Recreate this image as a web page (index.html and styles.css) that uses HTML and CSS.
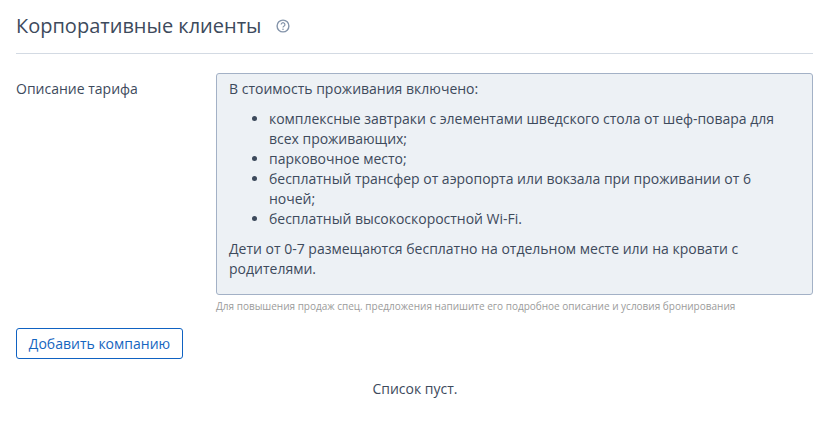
FILE: index.html
```html
<!DOCTYPE html>
<html lang="ru">
<head>
<meta charset="utf-8">
<title>Корпоративные клиенты</title>
<link rel="stylesheet" href="styles.css">
</head>
<body>
<main class="page">
  <header class="head">
    <h1 class="title">Корпоративные клиенты</h1>
    <svg class="help" width="14" height="14" viewBox="0 0 14 14" aria-hidden="true">
      <circle cx="7" cy="7" r="5.9" fill="none" stroke="#8494aa" stroke-width="1.4"/>
      <path d="M5.2 5.6a1.85 1.85 0 1 1 2.9 1.5c-.7.45-1.1.8-1.1 1.5" fill="none" stroke="#8494aa" stroke-width="1.2"/>
      <circle cx="7" cy="10.2" r=".8" fill="#8494aa"/>
    </svg>
  </header>
  <section class="row">
    <div class="label">Описание тарифа</div>
    <div class="field">
      <div class="box">
        <p>В стоимость проживания включено:</p>
        <ul>
          <li>комплексные завтраки с элементами шведского стола от шеф-повара для всех проживающих;</li>
          <li>парковочное место;</li>
          <li>бесплатный трансфер от аэропорта или вокзала при проживании от 6 ночей;</li>
          <li>бесплатный высокоскоростной Wi-Fi.</li>
        </ul>
        <p>Дети от 0-7 размещаются бесплатно на отдельном месте или на кровати с родителями.</p>
      </div>
      <div class="hint">Для повышения продаж спец. предложения напишите его подробное описание и условия бронирования</div>
    </div>
  </section>
  <button class="btn" type="button">Добавить компанию</button>
  <div class="empty">Список пуст.</div>
</main>
</body>
</html>
```
FILE: styles.css
```css
* { box-sizing: border-box; }
html, body { margin: 0; background: #fff; }
body { font-family: "Open Sans", "Noto Sans", sans-serif; font-size: 14px; line-height: 20px; color: #3d4a5c; }
.page { padding: 0 17px 0 16px; height: 437px; overflow: hidden; }
.head { display: flex; align-items: center; gap: 15px; height: 54px; border-bottom: 1px solid #d3dae3; }
.title { margin: -1px 0 0; font-size: 20px; line-height: 28px; font-weight: 400; color: #3d4a5c; }
.help { flex: none; margin-top: -1px; }
.row { display: flex; margin-top: 19px; }
.label { width: 200px; flex: none; padding-top: 6px; }
.field { flex: 1; min-width: 0; }
.box { height: 222px; padding: 5px 12px; background: #edf1f5; border: 1px solid #a3b1c6; border-radius: 3px; }
.box p { margin: 0; }
.box ul { margin: 10px 0; padding-left: 40px; letter-spacing: -0.02px; }
.hint { margin-top: 4px; font-size: 10px; line-height: 15px; color: #9b9b9b; }
.btn { display: block; margin-top: 14px; width: 167px; height: 31px; padding: 0; font: inherit; color: #1565c0; background: #fff; border: 1px solid #0f62c2; border-radius: 3px; }
.empty { margin-top: 20px; padding-left: 1px; text-align: center; }
```
